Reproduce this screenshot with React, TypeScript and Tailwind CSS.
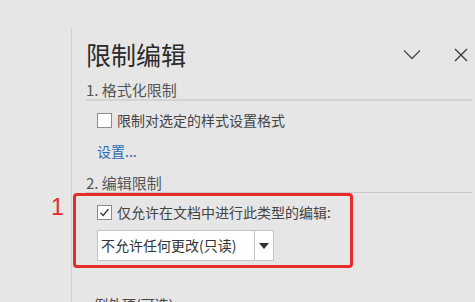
import React from 'react';

const font = { fontFamily: '"Noto Sans CJK SC", "Noto Sans", sans-serif' };

const Checkbox: React.FC<{ checked?: boolean }> = ({ checked }) => (
  <div className="w-[15px] h-[15px] shrink-0 bg-white border border-[#8c8c8c] flex items-center justify-center">
    {checked && (
      <svg width="11" height="11" viewBox="0 0 11 11">
        <path d="M1.5 5.8 L4.2 8.5 L9.5 2" fill="none" stroke="#3a3a3a" strokeWidth="1.4" />
      </svg>
    )}
  </div>
);

const App: React.FC = () => {
  return (
    <div className="relative w-[475px] h-[302px] overflow-hidden bg-[#e6e6e6] flex" style={font}>
      <div className="w-[71px] shrink-0" />

      {/* Task pane */}
      <div className="flex-1 mt-[28px] border-l border-[#cfcfcf] pl-[14px] pr-[3px] pt-[12px]">
        <div className="flex items-center h-[29px]">
          <div className="flex-1 text-[25px] leading-[29px] text-[#2a2a2a]">限制编辑</div>
          <svg width="18" height="11" viewBox="0 0 18 11" className="mr-[33px]">
            <path d="M1 1.5 L9 9.5 L17 1.5" fill="none" stroke="#4a4a4a" strokeWidth="1.3" />
          </svg>
          <svg width="14" height="14" viewBox="0 0 14 14" className="mr-[4px]">
            <path d="M1 1 L13 13 M13 1 L1 13" fill="none" stroke="#3a3a3a" strokeWidth="1.3" />
          </svg>
        </div>

        <div className="mt-[11px] h-[21px] leading-[19px] text-[15px] text-[#555] border-b-2 border-[#d3d3d3]">
          1. 格式化限制
        </div>

        <div className="mt-[9px] h-[20px] pl-[11px] flex items-center gap-[5px] text-[14px] text-[#444]">
          <Checkbox />
          <span>限制对选定的样式设置格式</span>
        </div>

        <div className="mt-[11px] h-[20px] leading-[20px] pl-[11px] text-[14px] text-[#2e6bb3]">设置...</div>

        <div className="mt-[12px] h-[20px] leading-[19px] text-[15px] text-[#555] border-b border-[#c9c9c9]">
          2. 编辑限制
        </div>

        {/* Highlighted area */}
        <div className="-ml-[13px] w-[280px] border-[3px] border-[#e52b2b] rounded-[4px] pt-[6px] pb-[4px] pl-[21px]">
          <div className="h-[20px] flex items-center gap-[5px] text-[14px] text-[#444]">
            <Checkbox checked />
            <span>仅允许在文档中进行此类型的编辑:</span>
          </div>
          <div className="mt-[8px] w-[177px] h-[31px] bg-white border border-[#c4c4c4] flex">
            <div className="flex-1 pl-[3px] leading-[29px] text-[14px] text-[#333] whitespace-nowrap">不允许任何更改(只读)</div>
            <div className="w-[19px] border-l border-[#c4c4c4] flex items-center justify-center">
              <svg width="10" height="6" viewBox="0 0 10 6">
                <path d="M0 0 L10 0 L5 6 Z" fill="#333" />
              </svg>
            </div>
          </div>
        </div>

        <div className="mt-[26px] pl-[8px] h-[20px] leading-[20px] text-[14px] text-[#444]">例外项(可选)</div>
      </div>

      <div
        className="absolute left-[51px] top-[193px] text-[23px] leading-[28px] text-[#e52b2b]"
        style={{ fontFamily: '"Liberation Sans", sans-serif' }}
      >
        1
      </div>
    </div>
  );
};

export default App;
